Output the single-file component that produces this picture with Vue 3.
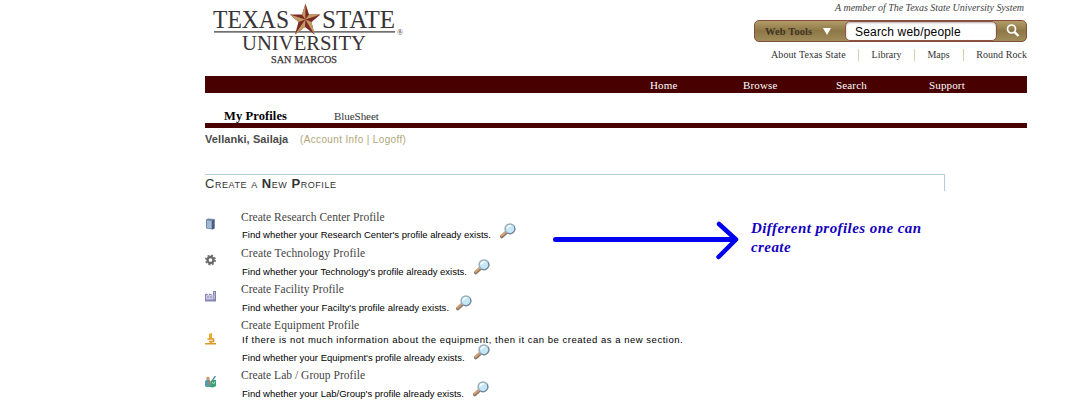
<script setup>
const quickLinks = [
  { label: 'About Texas State', cls: 'about' },
  { label: 'Library', cls: 'library' },
  { label: 'Maps', cls: 'maps' },
  { label: 'Round Rock', cls: 'rock' }
]
const nav = ['Home', 'Browse', 'Search', 'Support']
const profiles = [
  { icon: 'book', title: 'Create Research Center Profile', cls: 'research', find: "Find whether your Research Center's profile already exists." },
  { icon: 'gear', title: 'Create Technology Profile', cls: 'technology', find: "Find whether your Technology's profile already exists." },
  { icon: 'factory', title: 'Create Facility Profile', cls: 'facility', find: "Find whether your Facilty's profile already exists." },
  {
    icon: 'scope', title: 'Create Equipment Profile', cls: 'equipment',
    note: 'If there is not much information about the equipment, then it can be created as a new section.',
    find: "Find whether your Equipment's profile already exists."
  },
  { icon: 'group', title: 'Create Lab / Group Profile', cls: 'lab', find: "Find whether your Lab/Group's profile already exists." }
]
</script>

<template>
  <div class="page">
    <header class="header">
      <svg class="logo" width="200" height="70" viewBox="0 0 200 70">
        <g fill="#393436" font-family="'Liberation Serif', serif">
          <text x="8" y="27.500" font-size="26" textLength="76" lengthAdjust="spacingAndGlyphs">TEXAS</text>
          <text x="117" y="27.500" font-size="26" textLength="73" lengthAdjust="spacingAndGlyphs">STATE</text>
          <rect x="9" y="31.3" width="181" height="1.2" />
          <text x="37" y="50" font-size="20" textLength="124" lengthAdjust="spacingAndGlyphs">UNIVERSITY</text>
          <text x="66" y="63" font-size="10.500" stroke="#393436" stroke-width=".25" textLength="66" lengthAdjust="spacingAndGlyphs">SAN MARCOS</text>
          <text x="192" y="34.500" font-size="8">®</text>
        </g>
        <path d="M100.500 3.500 L104 14.500 H115.500 L106.500 22 L109.500 34.500 L100 27 L90 34.500 L93.500 22 L85 14.500 H97Z" fill="#7b2a26" />
        <path d="M100.500 3.500 L100.300 19.500 L97 14.500Z M115.500 14.500 L100.300 19.500 L104 14.500Z M109.500 34.500 L100.300 19.500 L106.500 22Z M90 34.500 L100.300 19.500 L100 27Z M85 14.500 L100.300 19.500 L93.500 22Z" fill="#c39a63" />
      </svg>
      <div class="tools">
        <div class="member">A member of The Texas State University System</div>
        <div class="searchbar">
          <span class="webtools">Web Tools</span>
          <svg class="caret" width="8" height="7"><path d="M0 0H8L4 7Z" fill="#fff" /></svg>
          <div class="field"><span>Search web/people</span></div>
          <svg class="glass" width="16" height="16" viewBox="0 0 16 16" fill="none" stroke="#fff">
            <circle cx="6.500" cy="6" r="4" stroke-width="1.700" />
            <path d="M9.500 9L13.500 13" stroke-width="2.400" />
          </svg>
        </div>
        <div class="quick">
          <span v-for="q in quickLinks" :key="q.label" :class="['ql', q.cls]">{{ q.label }}</span>
        </div>
      </div>
    </header>
    <nav class="nav"><a v-for="n in nav" :key="n">{{ n }}</a></nav>
    <div class="tabs">
      <span class="tab active">My Profiles</span>
      <span class="tab">BlueSheet</span>
    </div>
    <div class="user"><b>Vellanki, Sailaja</b><span>(Account Info | Logoff)</span></div>
    <h1 class="heading"><i>C</i>reate a <b>N</b>ew <b>P</b>rofile</h1>

    <main class="content">
      <ul class="list">
        <li v-for="p in profiles" :key="p.title" class="row" :class="p.cls">
          <svg class="icon" width="12" height="12" viewBox="0 0 12 12">
            <template v-if="p.icon === 'book'">
              <path d="M1 1.500L3 .5L9.500 1V10.500L7.500 11.500L1 10.500Z" fill="#6f87a8" />
              <path d="M2 2.500L6.500 3V10.500L2 10Z" fill="#a3b8d2" />
              <path d="M7 3L9.500 1.300V10.500L7 11.500Z" fill="#475d7d" />
            </template>
            <template v-else-if="p.icon === 'gear'">
              <circle cx="5.500" cy="6" r="4.600" fill="none" stroke="#777" stroke-width="1.700" stroke-dasharray="2 1.610" />
              <circle cx="5.500" cy="6" r="3" fill="none" stroke="#6a6a6a" stroke-width="2.300" />
            </template>
            <template v-else-if="p.icon === 'factory'">
              <path d="M0 4L1 3.500L4 5V3.500L8 5V1H11V11.500H0Z" fill="#8585b3" />
              <path d="M1 5H8.500V9.500H1Z" fill="#c9c9e4" />
              <path d="M2 7H4M5 7H7" stroke="#8d8db8" />
              <path d="M9 2H10V9H9Z" fill="#b6b6dc" />
            </template>
            <template v-else-if="p.icon === 'scope'">
              <path d="M4 1L7 0V6H4Z" fill="#edaa24" />
              <path d="M2.500 6H8.500V8.500H4M0 10.800H11M6 8V11" fill="none" stroke="#dc9a25" stroke-width="1.600" />
            </template>
            <template v-else>
              <circle cx="3" cy="2.500" r="1.800" fill="#cb9a6b" />
              <path d="M0 10V5Q2.500 2.500 5 5V11H1Z" fill="#5b9aaa" />
              <path d="M10.500 0L7.500 4" stroke="#5b88a5" stroke-width="1.300" />
              <path d="M5 11L5.500 5Q8.500 3 11 4V10L8 11.500Z" fill="#35a273" />
              <path d="M7 6L8.500 8L10 5.500" stroke="#b2e0d4" fill="none" />
              <path d="M4 4L5.500 9" stroke="#b87858" stroke-width="1.300" />
            </template>
          </svg>
          <div class="text">
            <a class="title">{{ p.title }}</a>
            <p v-if="p.note" class="note">{{ p.note }}</p>
            <div class="find">
              <span>{{ p.find }}</span>
              <svg class="mag" width="16" height="16" viewBox="0 0 16 16">
                <path d="M1.800 13.500L6.800 9" stroke="#8b7464" stroke-width="3.600" stroke-linecap="round" />
                <path d="M1.600 12.800L6 8.800" stroke="#d5a172" stroke-width="2" stroke-linecap="round" />
                <circle cx="10" cy="5.800" r="4.900" fill="#c5e8f6" stroke="#9aafbe" stroke-width="1.500" />
                <path d="M14.300 3.500A5 5 0 0 1 7.500 10.200" fill="none" stroke="#6b7f91" stroke-width="1" />
                <path d="M7 5.500Q8 2.500 11 2.800" stroke="#fff" stroke-width="1.500" fill="none" />
              </svg>
            </div>
          </div>
        </li>
      </ul>
      <aside class="callout">
        <svg class="arrow" width="190" height="44" viewBox="0 0 190 44" fill="none" stroke="#0000f0" stroke-width="5" stroke-linecap="round" stroke-linejoin="round">
          <path d="M2.500 22.500H182" />
          <path d="M166 7L183 22.500L165.500 40" stroke-width="4.500" />
        </svg>
        <p>Different profiles one can<br>create</p>
      </aside>
    </main>
  </div>
</template>

<style>
body { background: #fff; overflow: hidden; }
</style>
<style scoped>
.page { width: 822px; height: 408px; margin-left: 205px; overflow: hidden; font-family: "Liberation Serif", serif; color: #333; }
.header { height: 76px; display: flex; justify-content: space-between; }
.logo { display: block; }
.tools { width: 273px; }
.member { height: 20px; line-height: 16px; text-align: right; padding-right: 3px; font-size: 10px; font-style: italic; white-space: nowrap; letter-spacing: -.03px; color: #444; }
.searchbar { height: 22px; box-sizing: border-box; display: flex; align-items: center; border: 1px solid #80503a; border-radius: 5px; background: linear-gradient(#b39c68, #8d7746 50%, #a08b5a); }
.webtools { width: 57px; margin-left: 10px; font-size: 10.500px; letter-spacing: .1px; font-weight: bold; color: #403523; white-space: nowrap; }
.caret { margin-left: 1px; }
.field { margin-left: 14px; width: 152px; height: 20px; box-sizing: border-box; padding-left: 9px; border: 1px solid #8b5542; border-radius: 5px; background: #fff; color: #000; font: 12px/21px "Liberation Sans", sans-serif; letter-spacing: .18px; box-shadow: inset 0 1px 2px #baa; white-space: nowrap; }
.glass { margin-left: 8px; }
.quick { display: flex; height: 26px; line-height: 26px; font-size: 10px; padding-left: 17px; }
.ql { white-space: nowrap; }
.ql + .ql { border-left: 1px solid #d5cdb0; height: 12px; line-height: 12px; margin-top: 7px; padding-left: 13px; }
.about { width: 87px; letter-spacing: .1px; }
.library { width: 43px; }
.quick .maps { width: 36px; padding-left: 12px; }
.quick .rock { padding-left: 12px; letter-spacing: .05px; }
.nav { height: 17px; background: #480000; display: grid; grid-template-columns: repeat(4, 93px); padding-left: 445px; color: #fff; font-size: 11px; line-height: 18px; letter-spacing: .15px; }
.tabs { height: 35px; box-sizing: border-box; border-bottom: 5px solid #480000; display: flex; padding-left: 19px; line-height: 46px; }
.tab { font-size: 11px; letter-spacing: -.05px; white-space: nowrap; }
.tab.active { width: 110px; font-size: 12.500px; letter-spacing: .1px; font-weight: bold; color: #000; }
.user { height: 46px; line-height: 23px; display: flex; font-family: "Liberation Sans", sans-serif; font-size: 10px; letter-spacing: .36px; color: #b0a679; white-space: nowrap; }
.user b { width: 95px; font-size: 11px; letter-spacing: .08px; color: #4a4a4a; }
.heading { width: 740px; height: 17px; box-sizing: border-box; margin: 0; border: solid #b4cedb; border-width: 1px 1px 0 0; font: 13px/17px "Liberation Sans", sans-serif; font-variant: small-caps; letter-spacing: .54px; color: #333; white-space: nowrap; }
.heading i { font-style: normal; }
.content { display: flex; padding-top: 18px; }
.list { width: 348px; margin: 0; padding: 0; list-style: none; flex: none; }
.row { height: 36px; display: flex; }
.row.equipment { height: 50px; }
.icon { width: 12px; height: 12px; margin-top: 9px; flex: none; }
.equipment .icon { margin-top: 16px; }
.text { margin-left: 24px; white-space: nowrap; }
.title { display: block; height: 16px; line-height: 17px; font-size: 11.500px; letter-spacing: .03px; color: #444; }
.technology .title { letter-spacing: .13px; }
.note { margin: 0; height: 13px; line-height: 13px; letter-spacing: .52px; }
.note, .find { padding-left: 1px; font-family: "Liberation Sans", sans-serif; font-size: 9.500px; color: #000; }
.find { height: 20px; line-height: 22px; display: flex; }
.research .find { line-height: 20px; }
.equipment .find { line-height: 23px; }
.facility .find { letter-spacing: .05px; }
.mag { margin: -2px 0 0 9px; }
.technology .mag, .facility .mag { margin-left: 7px; }
.callout { display: flex; align-items: flex-start; }
.arrow { flex: none; margin-top: 8px; }
.callout p { margin: 10px 0 0 8px; font-size: 15px; line-height: 19px; font-weight: bold; font-style: italic; letter-spacing: .43px; color: #1400c0; white-space: nowrap; }
</style>
